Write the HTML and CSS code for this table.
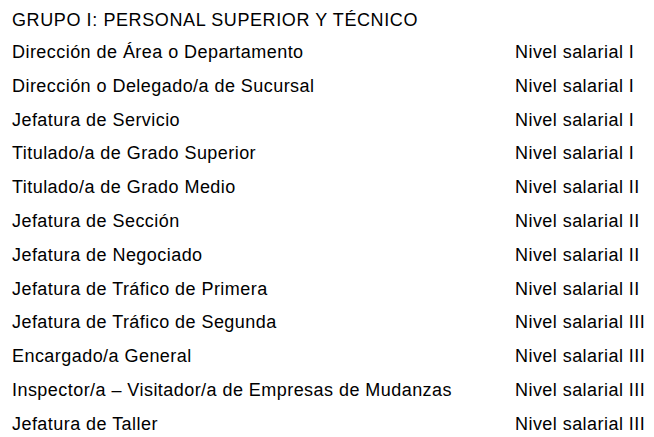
FILE: index.html
```html
<!DOCTYPE html>
<html lang="es">
<head>
<meta charset="utf-8">
<link rel="stylesheet" href="styles.css">
</head>
<body>
<div class="doc">
  <div class="title">GRUPO I: PERSONAL SUPERIOR Y TÉCNICO</div>
  <div class="table">
    <div class="row"><span class="cat">Dirección de Área o Departamento</span><span class="lvl">Nivel salarial I</span></div>
    <div class="row"><span class="cat">Dirección o Delegado/a de Sucursal</span><span class="lvl">Nivel salarial I</span></div>
    <div class="row"><span class="cat">Jefatura de Servicio</span><span class="lvl">Nivel salarial I</span></div>
    <div class="row"><span class="cat">Titulado/a de Grado Superior</span><span class="lvl">Nivel salarial I</span></div>
    <div class="row"><span class="cat">Titulado/a de Grado Medio</span><span class="lvl">Nivel salarial II</span></div>
    <div class="row"><span class="cat">Jefatura de Sección</span><span class="lvl">Nivel salarial II</span></div>
    <div class="row"><span class="cat">Jefatura de Negociado</span><span class="lvl">Nivel salarial II</span></div>
    <div class="row"><span class="cat">Jefatura de Tráfico de Primera</span><span class="lvl">Nivel salarial II</span></div>
    <div class="row"><span class="cat">Jefatura de Tráfico de Segunda</span><span class="lvl">Nivel salarial III</span></div>
    <div class="row"><span class="cat">Encargado/a General</span><span class="lvl">Nivel salarial III</span></div>
    <div class="row"><span class="cat">Inspector/a – Visitador/a de Empresas de Mudanzas</span><span class="lvl">Nivel salarial III</span></div>
    <div class="row"><span class="cat">Jefatura de Taller</span><span class="lvl">Nivel salarial III</span></div>
  </div>
</div>
</body>
</html>
```

FILE: styles.css
```css
html, body {
  margin: 0;
  padding: 0;
  background: #ffffff;
}
.doc {
  font-family: "Liberation Sans", Arial, sans-serif;
  font-size: 18px;
  letter-spacing: 0.45px;
  color: #000000;
  padding: 4px 0 0 12px;
}
.title {
  line-height: 32px;
  letter-spacing: 0.6px;
}
.table {
  display: flex;
  flex-direction: column;
}
.row {
  display: grid;
  grid-template-columns: 503px auto;
  height: 33.8px;
  line-height: 33.8px;
}
.cat, .lvl {
  white-space: nowrap;
}
```
